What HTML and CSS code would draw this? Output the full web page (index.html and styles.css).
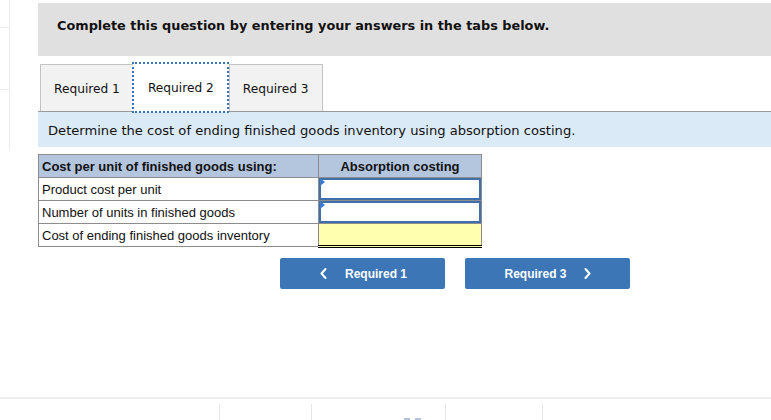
FILE: index.html
```html
<!DOCTYPE html>
<html>
<head>
<meta charset="utf-8">
<link rel="stylesheet" href="styles.css">
</head>
<body>
<div class="page">
  <aside class="side">
    <div class="side-box b1"></div>
    <div class="side-box b2"></div>
    <div class="side-box b3"></div>
  </aside>
  <main class="main">
    <div class="banner">Complete this question by entering your answers in the tabs below.</div>
    <div class="tabs">
      <div class="tab">Required 1</div>
      <div class="tab active">Required 2</div>
      <div class="tab">Required 3</div>
    </div>
    <div class="prompt">Determine the cost of ending finished goods inventory using absorption costing.</div>
    <table class="grid">
      <tr class="head">
        <th class="label">Cost per unit of finished goods using:</th>
        <th class="val">Absorption costing</th>
      </tr>
      <tr>
        <td class="label">Product cost per unit</td>
        <td class="val input"><span class="flag"></span></td>
      </tr>
      <tr>
        <td class="label">Number of units in finished goods</td>
        <td class="val input"><span class="flag"></span></td>
      </tr>
      <tr>
        <td class="label">Cost of ending finished goods inventory</td>
        <td class="val total"></td>
      </tr>
    </table>
    <div class="nav">
      <button class="btn"><svg class="chev left" width="7" height="11" viewBox="0 0 7 11"><path d="M5.5 1 L1.5 5.5 L5.5 10" fill="none" stroke="#fff" stroke-width="2" stroke-linecap="round" stroke-linejoin="round"/></svg>Required 1</button>
      <button class="btn">Required 3<svg class="chev right" width="7" height="11" viewBox="0 0 7 11"><path d="M1.5 1 L5.5 5.5 L1.5 10" fill="none" stroke="#fff" stroke-width="2" stroke-linecap="round" stroke-linejoin="round"/></svg></button>
    </div>
  </main>
</div>
<footer class="foot">
  <div class="cols">
    <div class="col c1"></div>
    <div class="col c2"></div>
    <div class="col c3"><span class="dash"></span></div>
    <div class="col c4"></div>
  </div>
</footer>
</body>
</html>
```
FILE: styles.css
```css
html, body {
  margin: 0;
  padding: 0;
  background: #fff;
}
body {
  width: 771px;
  height: 420px;
  overflow: hidden;
  font-family: "DejaVu Sans", Verdana, sans-serif;
  color: #111;
}
.page {
  display: flex;
  align-items: flex-start;
  height: 397px;
}
.side {
  width: 9px;
  height: 150px;
  border-right: 1px solid #ececec;
  display: flex;
  flex-direction: column;
}
.side-box {
  border-bottom: 1px solid #ececec;
}
.b1 { height: 27px; }
.b2 { height: 62px; }
.b3 { height: 60px; border-bottom: none; }
.main {
  margin-left: 28px;
  flex: 1;
  padding-top: 3px;
}
.banner {
  background: #e0e0e0;
  height: 53px;
  box-sizing: border-box;
  padding: 15px 0 0 19px;
  font-weight: bold;
  font-size: 12.85px;
}
.tabs {
  display: flex;
  margin-top: 8px;
  padding-left: 2px;
  border-bottom: 1px solid #9a9a9a;
  height: 47px;
}
.tab {
  box-sizing: border-box;
  height: 47px;
  padding: 1px 13px 0;
  display: flex;
  align-items: center;
  background: #f2f2f2;
  border: 1px solid #c4c4c4;
  border-bottom: none;
  font-size: 12.2px;
  color: #111;
}
.tab.active {
  background: #fff;
  border: none;
  outline: 2px dotted #3a73b8;
  outline-offset: -1px;
  position: relative;
  height: 49px;
  margin-top: -1px;
  margin-bottom: -2px;
  padding: 0 14px 0 15px;
  margin-left: -1px;
  z-index: 1;
}
.tab.active + .tab { margin-left: 1px; }
.prompt {
  background: #dbeaf7;
  height: 35px;
  box-sizing: border-box;
  padding: 11px 0 0 10px;
  font-size: 13.1px;
  color: #111;
}
.grid {
  margin-top: 7px;
  border-collapse: collapse;
  font-family: "Liberation Sans", Arial, sans-serif;
  font-size: 13px;
}
.grid th, .grid td {
  border: 1px solid #8d8d8d;
  height: 23px;
  padding: 0 3px;
  box-sizing: border-box;
}
.grid .head th {
  background: #b4c6de;
  font-weight: bold;
  color: #111;
}
.grid th.label { text-align: left; }
.grid .label { width: 280px; }
.grid .val { width: 163px; text-align: center; }
.grid td.input {
  position: relative;
  padding: 0;
  box-shadow: inset 0 0 0 2px #3f70ab;
  background: #fff;
}
.flag {
  position: absolute;
  left: 1px;
  top: 0;
  width: 0;
  height: 0;
  border-top: 4px solid transparent;
  border-bottom: 4px solid transparent;
  border-left: 5px solid #3d7bd0;
}
.grid td.total {
  background: #ffffad;
  border-bottom: 3px double #000;
}
.nav {
  display: flex;
  gap: 20px;
  margin-top: 10px;
  padding-left: 242px;
}
.btn {
  width: 165px;
  height: 31px;
  border: none;
  border-radius: 2px;
  background: #3d76b6;
  color: #fff;
  font-family: "Liberation Sans", Arial, sans-serif;
  font-weight: bold;
  font-size: 12px;
  display: flex;
  align-items: center;
  justify-content: center;
  padding: 0;
}
.chev.left { margin-right: 18px; margin-left: 2px; }
.chev.right { margin-left: 17px; }
.foot {
  border-top: 2px solid #eeeeee;
  height: 23px;
  background: #fff;
}
.cols {
  display: flex;
  padding-left: 219px;
  padding-top: 5px;
  height: 18px;
}
.col {
  border-left: 1px solid #e6e6e6;
  height: 18px;
}
.c1 { width: 91px; }
.c2 { width: 133px; }
.c3 { width: 96px; position: relative; }
.c4 { width: 100px; }
.dash {
  position: absolute;
  left: -42px;
  bottom: 0;
  width: 17px;
  height: 2px;
  border-top: 2px dashed #b0c4e0;
}
```
